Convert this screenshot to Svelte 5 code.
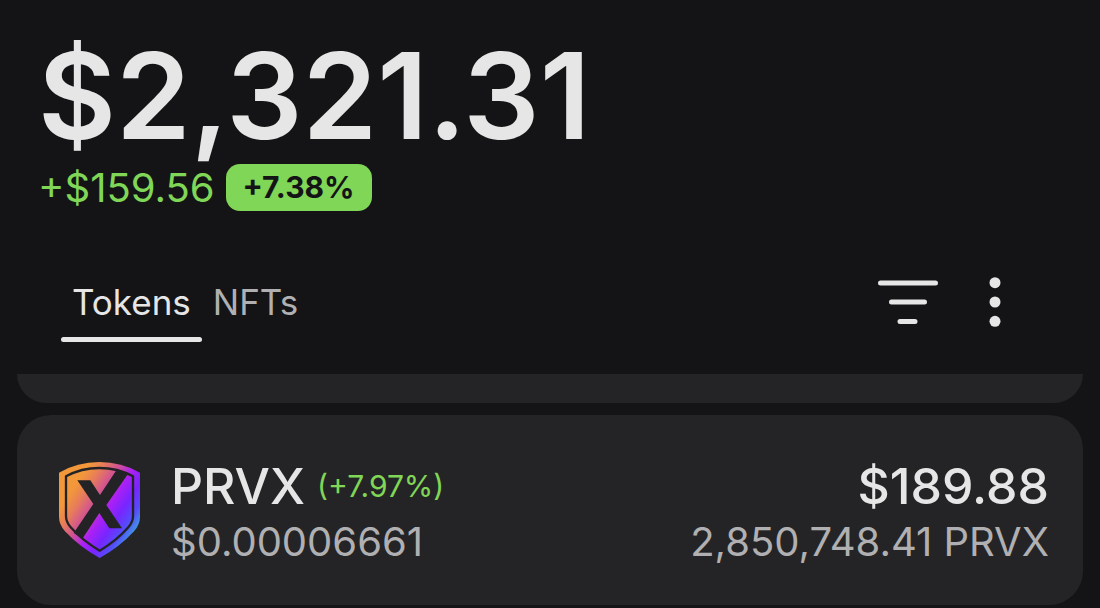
<script>
  const balance = { total: "$2,321.31", change: "+$159.56", percent: "+7.38%" };

  const tabs = ["Tokens", "NFTs"];
  let activeTab = $state("Tokens");

  const tokens = [
    {
      symbol: "PRVX",
      change: "(+7.97%)",
      price: "$0.00006661",
      value: "$189.88",
      amount: "2,850,748.41 PRVX",
    },
  ];
</script>

<main class="wallet">
  <header class="balance">
    <h1>{balance.total}</h1>
    <div class="change">
      <span>{balance.change}</span>
      <span class="badge">{balance.percent}</span>
    </div>
  </header>

  <nav class="toolbar">
    <div class="tabs">
      {#each tabs as tab}
        <button class="tab" class:active={tab === activeTab} onclick={() => (activeTab = tab)}>
          {tab}
        </button>
      {/each}
    </div>
    <div class="actions">
      <button class="action" aria-label="Filter">
        <svg width="60" height="50" viewBox="0 0 60 50" stroke="currentColor" stroke-width="5" stroke-linecap="round">
          <path d="M2.5 6H57.5M13.5 25H46.5M22 44.5H37" />
        </svg>
      </button>
      <button class="action" aria-label="More options">
        <svg width="12" height="50" viewBox="0 0 12 50" fill="currentColor">
          <circle cx="6" cy="5.7" r="5.5" />
          <circle cx="6" cy="25" r="5.5" />
          <circle cx="6" cy="44.3" r="5.5" />
        </svg>
      </button>
    </div>
  </nav>

  <section class="list">
    <div class="card previous"></div>
    {#each tokens as token}
      <article class="card token">
        <svg class="logo" width="81" height="96" viewBox="57 38 243 288" aria-hidden="true">
          <defs>
            <linearGradient id="shield" gradientUnits="userSpaceOnUse" x1="80" y1="110" x2="286" y2="247">
              <stop offset="0.08" stop-color="#f2983a" />
              <stop offset="0.22" stop-color="#e87e58" />
              <stop offset="0.4" stop-color="#cf4f97" />
              <stop offset="0.56" stop-color="#ab20f5" />
              <stop offset="0.72" stop-color="#7825ff" />
              <stop offset="0.87" stop-color="#544dfa" />
              <stop offset="1" stop-color="#409be3" />
            </linearGradient>
          </defs>
          <path
            fill="url(#shield)"
            d="M57 70Q112 38 178 38Q245 38 300 70V202Q300 225 282 246Q238 294 179 326Q120 294 75 246Q57 225 57 202Z"
          />
          <path
            fill="none"
            stroke="#232325"
            stroke-width="7"
            d="M78 81Q124 56 178 56Q233 56 279 81V200Q279 218 265 234Q229 275 179 304Q129 275 92 234Q78 218 78 200Z"
          />
          <path fill="#232325" d="M112 93H151L180 137L231 60L264 74L199 167L246 237H208L178 191L128 267L101 251L160 164Z" />
        </svg>
        <div class="info">
          <div class="name">
            <h2>{token.symbol}</h2>
            <span class="gain">{token.change}</span>
          </div>
          <p>{token.price}</p>
        </div>
        <div class="holding">
          <strong>{token.value}</strong>
          <p>{token.amount}</p>
        </div>
      </article>
    {/each}
  </section>
</main>

<style>
  :global(body) {
    margin: 0;
    background: #141416;
  }

  .wallet {
    --text: #e6e6e6;
    --muted: #b0b0b2;
    --green: #80d656;
    --card: #242426;
    padding-top: 36px;
    font-family: Inter, "Liberation Sans", sans-serif;
    color: var(--text);
  }

  h1,
  h2,
  p {
    margin: 0;
  }

  .balance {
    padding: 0 38px;
  }

  h1 {
    font-size: 120px;
    line-height: 120px;
    font-weight: 600;
  }

  .change {
    display: flex;
    align-items: center;
    gap: 11px;
    margin-top: 8px;
    font-size: 40px;
    line-height: 47px;
    color: var(--green);
  }

  .badge {
    padding: 0 17px;
    border-radius: 14px;
    font-size: 30px;
    font-weight: 700;
    color: #141416;
    background: var(--green);
  }

  .toolbar {
    display: flex;
    align-items: flex-start;
    justify-content: space-between;
    margin-top: 66px;
    padding: 0 99px 32px 61px;
  }

  .tabs {
    display: flex;
  }

  button {
    border: 0;
    padding: 0;
    font: inherit;
    color: inherit;
    background: none;
    cursor: pointer;
  }

  .tab {
    padding: 0 11px;
    font-size: 35px;
    line-height: 50px;
    color: var(--muted);
  }

  .tab::after {
    content: "";
    display: block;
    height: 5px;
    margin: 10px -11px 0;
    border-radius: 3px;
  }

  .tab.active {
    color: var(--text);
  }

  .tab.active::after {
    background: var(--text);
  }

  .actions {
    display: flex;
    gap: 51px;
  }

  .action svg {
    display: block;
  }

  .list {
    display: flex;
    flex-direction: column;
    gap: 12px;
    padding: 0 17px;
  }

  .card {
    border-radius: 34px;
    background: var(--card);
  }

  /* the card above is scrolled almost out of view */
  .previous {
    height: 29px;
    border-radius: 0 0 34px 34px;
  }

  .token {
    display: flex;
    align-items: center;
    gap: 31px;
    padding: 36px 34px 36px 42px;
    line-height: 55px;
  }

  .info,
  .holding {
    padding-top: 8px;
  }

  .info {
    flex: 1;
  }

  .name {
    display: flex;
    align-items: center;
    gap: 12px;
  }

  h2,
  strong {
    font-size: 50px;
    font-weight: 500;
  }

  .holding {
    text-align: right;
  }

  .holding strong {
    display: block;
  }

  .gain {
    font-size: 30px;
    color: var(--green);
  }

  p {
    font-size: 40px;
    color: var(--muted);
  }
</style>
